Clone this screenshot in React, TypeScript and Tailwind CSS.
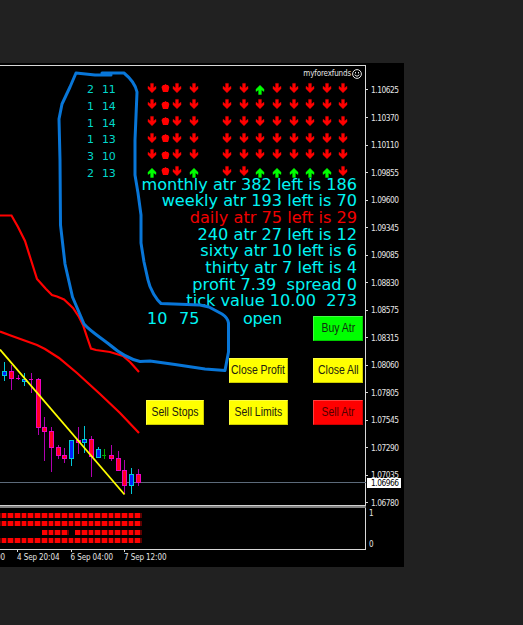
import React from "react";

const verdana = "font-['DejaVu_Sans',Verdana,sans-serif]";
const tahoma = "font-['DejaVu_Sans_Condensed','DejaVu_Sans',Tahoma,sans-serif]";

const counts = [
  ["2", "11"],
  ["1", "14"],
  ["1", "14"],
  ["1", "13"],
  ["3", "10"],
  ["2", "13"],
];

// d = down arrow, u = up arrow, o = neutral dot
const signals = [
  "dodddduddddd",
  "dodddddddddd",
  "dodddddddddd",
  "dodddddddddd",
  "dodddddddddd",
  "uodudduuuuud",
];

const stats = [
  { text: "monthly atr 382 left is 186", color: "text-[#00f4f4]" },
  { text: "weekly atr 193 left is 70", color: "text-[#00f4f4]" },
  { text: "daily atr 75 left is 29", color: "text-[#f00000]" },
  { text: "240 atr 27 left is 12", color: "text-[#00f4f4]" },
  { text: "sixty atr 10 left is 6", color: "text-[#00f4f4]" },
  { text: "thirty atr 7 left is 4", color: "text-[#00f4f4]" },
  { text: "profit 7.39  spread 0", color: "text-[#00f4f4]" },
  { text: "tick value 10.00  273", color: "text-[#00f4f4]" },
];

const prices = [
  "1.10625", "1.10370", "1.10110", "1.09855", "1.09600", "1.09345", "1.09085", "1.08830",
  "1.08575", "1.08315", "1.08060", "1.07805", "1.07545", "1.07290", "1.07035", "1.06780",
];

type Candle = [x: number, high: number, low: number, top: number, bottom: number, kind: "up" | "down" | "flat"];

const candles: Candle[] = [
  [4, 362, 381, 371, 376, "up"],
  [11, 365, 390, 371, 379, "down"],
  [18, 375, 380, 378, 379, "down"],
  [24, 373, 386, 379, 382, "up"],
  [31, 373, 393, 379, 380, "down"],
  [38, 378, 435, 379, 428, "down"],
  [44, 417, 461, 427, 432, "down"],
  [51, 427, 472, 431, 448, "down"],
  [58, 445, 459, 447, 456, "down"],
  [64, 448, 463, 455, 459, "down"],
  [71, 440, 466, 440, 459, "up"],
  [78, 427, 454, 440, 443, "down"],
  [84, 426, 453, 439, 443, "up"],
  [91, 436, 477, 439, 457, "down"],
  [98, 447, 458, 449, 458, "up"],
  [104, 449, 459, 455, 456, "flat"],
  [111, 445, 461, 455, 459, "down"],
  [118, 451, 471, 458, 471, "down"],
  [124, 460, 494, 470, 486, "down"],
  [131, 468, 494, 474, 486, "up"],
  [138, 469, 486, 474, 483, "down"],
];

const palette = {
  up: { line: "#00c8d8", fill: "#0020ff" },
  down: { line: "#f000c0", fill: "#ff0020" },
  flat: { line: "#00b000", fill: "#00b000" },
};

function Signal({ kind }: { kind: string }) {
  if (kind === "o") {
    return (
      <svg width="9" height="10" viewBox="0 0 9 10" className="mt-px block">
        <path d="M2 2 3.300 2 4.500 1 5.700 2 7 2 8.300 4 7.800 6.800 7 9H2L1.200 6.800.5 4Z" fill="#f00" />
      </svg>
    );
  }
  if (kind === "u") {
    return (
      <svg width="8" height="10" viewBox="0 0 8 10" className="mt-[3px] block overflow-visible">
        <path d="M4 .2 8 4.200V6.500L5.400 4.900V9.500H2.600V4.900L0 6.500V4.200Z" fill="#0f0" stroke="#0f0" strokeWidth="0.400" />
      </svg>
    );
  }
  return (
    <svg width="8" height="10" viewBox="0 0 8 10" className="mt-[0.500px] block overflow-visible">
      <path d="M4 9.800 8 5.700V3.300L5.400 5V.4H2.600V5L0 3.300V5.700Z" fill="#f00" stroke="#f00" strokeWidth="0.400" />
    </svg>
  );
}

function TradeButton({ label, color }: { label: string; color: string }) {
  return (
    <button
      className={`flex h-[25px] w-full items-center justify-center border border-t-white/25 border-l-white/25 border-r-black/20 border-b-black/20 p-0 font-['Liberation_Sans',Arial,sans-serif] text-[12px] leading-[23px] ${color}`}
    >
      <span className="scale-x-[0.870] whitespace-nowrap">{label}</span>
    </button>
  );
}

function Drawing() {
  return (
    <svg
      width="404"
      height="504"
      viewBox="0 63 404 504"
      fill="none"
      className="pointer-events-none absolute top-0 left-0"
    >
      <path d="M0 482.5H366" stroke="#5c6a7a" />
      {candles.map(([x, high, low, top, bottom, kind]) => {
        const c = palette[kind];
        const small = bottom - top < 2;
        return (
          <g key={x} shapeRendering="crispEdges">
            <rect x={x} y={high} width="1" height={low - high} fill={kind === "down" ? "#b000b0" : c.line} />
            <rect x={x - 2} y={top} width={small ? 4 : 5} height={bottom - top} fill={c.line} />
            {!small && <rect x={x - 1} y={top + 1} width="3" height={bottom - top - 2} fill={c.fill} />}
          </g>
        );
      })}
      <path
        d="M0 215.5H11.5L18 227 25 241 31 260 37 279 46 289 52 295 57 296.5 64 299.5 73 308 79 317 83 325 87 337 91 348.5 96 350 110 352 123 356 130 362 139 372"
        stroke="#f00"
        strokeWidth="2.200"
      />
      <path d="M0 331.5 12 336 37 345 45 349 59 358 77 373 100 394 120 413 139 433" stroke="#f00" strokeWidth="2.200" />
      <path d="M0 349.5 124.5 494.5" stroke="#ff0" strokeWidth="1.800" />
      <path
        d="M111 75 95 75 76 73 70 87 62 104 59 119 60 160 60.5 225 65 264 72.5 297 84 324C90 331 100 337 110 345Q125 358 140 361.5L150 361 175 364.500 205 369 225 370.500 228.500 352V323Q228 318 222 314L209 307 200 305 161 303.500C157 300 150 290 148 280L144 262 141 243V215L138 193 135 175V140L137 92Q135 82 124 73H102"
        stroke="#0876d8"
        strokeWidth="3"
        strokeLinejoin="round"
        strokeLinecap="round"
      />
    </svg>
  );
}

export default function App() {
  return (
    <div className="h-[625px] w-[523px] overflow-hidden bg-[#212121] pt-[63px]">
      <main className="relative h-[504px] w-[404px] overflow-hidden bg-black pt-[2px]">
        <div className="flex h-[440px]">
          <section className="w-[366px] border-t border-r border-[#d8d8d8]">
            <header className={`flex h-[16px] items-center justify-end gap-[1px] pr-[3px] text-[8px] text-[#e4e4e4] ${tahoma}`}>
              <span className="tracking-[-0.150px]">myforexfunds</span>
              <svg width="10" height="10" viewBox="0 0 10 10" fill="none" stroke="#e4e4e4">
                <circle cx="5" cy="5" r="4.400" />
                <path d="M2.600 5.800Q5 8.800 7.400 5.800M3.500 3V4.500M6.500 3V4.500" />
              </svg>
            </header>

            <div className="flex h-[94.600px]">
              <div className={`ml-[87px] w-[61px] text-[11px] text-[#00d8cc] ${verdana}`}>
                {counts.map(([a, b], i) => (
                  <div key={i} className="flex h-[16.650px] items-center leading-[16px]">
                    <span className="w-[15px]">{a}</span>
                    <span className="tracking-[-0.300px]">{b}</span>
                  </div>
                ))}
              </div>
              <div className="grid auto-rows-[16.700px] grid-cols-[12.500px_12.500px_16.700px_33.300px_repeat(8,16.650px)]">
                {signals.flatMap((row, r) => row.split("").map((kind, c) => <Signal key={`${r}-${c}`} kind={kind} />))}
              </div>
            </div>

            <div className={`mr-[8px] text-right text-[16.150px] ${verdana}`}>
              {stats.map(({ text, color }) => (
                <p key={text} className={`h-[16.670px] whitespace-pre leading-[16.670px] ${color}`}>{text}</p>
              ))}
            </div>

            <div className="flex pl-[146px]">
              <p className={`flex w-[167px] gap-[11px] pl-px text-[16px] leading-[17.500px] text-[#00f4f4] ${verdana}`}>
                <span className="w-[21px]">10</span>
                <span className="w-[53px]">75</span>
                <span className="tracking-[-0.300px]">open</span>
              </p>
              <div className="mt-[6.200px] w-[50px]">
                <TradeButton label="Buy Atr" color="bg-[#00ff00] text-[#103010]" />
              </div>
            </div>
            <div className="mt-[17px] ml-[146px] grid grid-cols-[58px_59px_50px] gap-x-[25px] gap-y-[16.700px]">
              <span />
              <TradeButton label="Close Profit" color="bg-[#ffff00] text-[#202010]" />
              <TradeButton label="Close All" color="bg-[#ffff00] text-[#202010]" />
              <TradeButton label="Sell Stops" color="bg-[#ffff00] text-[#202010]" />
              <TradeButton label="Sell Limits" color="bg-[#ffff00] text-[#202010]" />
              <TradeButton label="Sell Atr" color="bg-[#ff0000] text-[#500000]" />
            </div>
          </section>

          <aside className={`relative w-[38px] pt-[11.200px] text-[8.300px] tracking-[-0.480px] text-[#e4e4e4] ${tahoma}`}>
            {prices.map((price) => (
              <div key={price} className="flex h-[27.530px] items-start">
                <div className="flex h-[28px] items-start leading-[28px]">
                  <span className="mt-[13.300px] mr-[3px] h-px w-[2px] bg-[#d8d8d8]" />
                  {price}
                </div>
              </div>
            ))}
            <span className="absolute top-[413px] left-[1px] h-[10px] w-[34px] bg-white pl-[4px] leading-[10px] text-black">
              1.06966
            </span>
          </aside>
        </div>

        <div className="h-[3px] w-[366px] border-t border-[#d0d0d0] bg-[#808080]" />
        <div className="flex h-[42px]">
          <section className="flex w-[366px] flex-col gap-[3.400px] border-r border-b border-[#d8d8d8] pt-[5px]">
            {[0, 1, 2, 3].map((row) => (
              <div key={row} className="-ml-[5px] flex h-[5px]">
                {Array.from({ length: 22 }, (_, i) => (
                  <span
                    key={i}
                    className={`h-[5px] w-[6.690px] shrink-0 border-r-2 ${
                      row === 2 && (i < 7 || i === 11) ? "border-black" : "border-[#600000] bg-[#ff0000]"
                    }`}
                  />
                ))}
              </div>
            ))}
          </section>
          <aside className={`flex flex-col justify-between pl-[3px] text-[8px] leading-[10px] text-[#e4e4e4] ${tahoma}`}>
            <span className="mt-px">1</span>
            <span>0</span>
          </aside>
        </div>

        <footer className={`flex text-[8px] leading-[12px] tracking-[-0.100px] whitespace-nowrap text-[#e4e4e4] ${tahoma}`}>
          <span className="w-[17px] pt-[2px] -indent-[4px]">00</span>
          {["4 Sep 20:04", "6 Sep 04:00", "7 Sep 12:00"].map((label) => (
            <div key={label} className="w-[53.500px]">
              <div className="h-[2px] w-px bg-[#d8d8d8]" />
              {label}
            </div>
          ))}
        </footer>
        <Drawing />
      </main>
    </div>
  );
}
